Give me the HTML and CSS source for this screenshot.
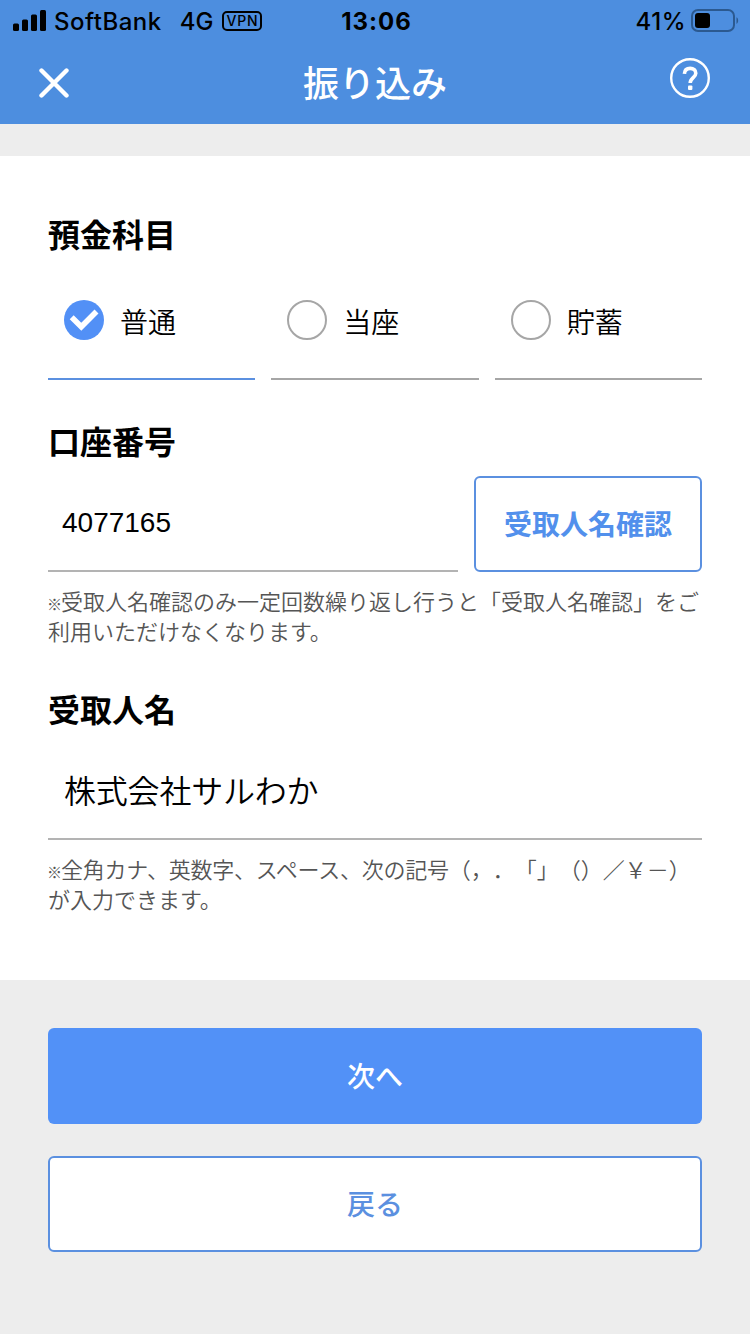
FILE: index.html
```html
<!DOCTYPE html>
<html lang="ja">
  <head>
    <meta charset="UTF-8" />
    <meta name="viewport" content="width=device-width, initial-scale=1.0" />
    <title>振り込み</title>
    <link rel="stylesheet" href="styles.css">
  </head>
  <body>
    <header class="header">
      <div class="status-bar">
        <div class="status-left">
          <svg class="signal" width="34" height="22" viewBox="0 0 34 22">
            <rect x="0" y="13.5" width="6" height="7.5" rx="1.5" />
            <rect x="9" y="9.5" width="6" height="11.5" rx="1.5" />
            <rect x="18" y="4.5" width="6" height="16.5" rx="1.5" />
            <rect x="27" y="0" width="6" height="21" rx="1.5" />
          </svg>
          <span class="carrier">SoftBank</span>
          <span class="network">4G</span>
          <span class="vpn">VPN</span>
        </div>
        <span class="clock">13:06</span>
        <div class="status-right">
          <span class="percent">41%</span>
          <svg class="battery" width="49" height="24" viewBox="0 0 49 24">
            <rect x="1" y="1" width="42" height="21" rx="6" fill="none" stroke="#2b5990" stroke-width="2" />
            <rect x="4" y="4" width="15" height="15" rx="3" fill="#000" />
            <path d="M45.500 8.300c2.200 1 2.200 5.600 0 6.600z" fill="#2b5990" />
          </svg>
        </div>
      </div>
      <div class="nav-bar">
        <button class="icon-btn" aria-label="閉じる">
          <svg width="30" height="30" viewBox="0 0 30 30">
            <path d="M2.500 2.500l25 25M27.500 2.500l-25 25" fill="none" stroke="#fff" stroke-width="4.400" stroke-linecap="round" />
          </svg>
        </button>
        <h1>振り込み</h1>
        <button class="icon-btn help" aria-label="ヘルプ">
          <svg width="40" height="40" viewBox="0 0 40 40" fill="none" stroke="#fff">
            <circle cx="20" cy="20" r="18.800" stroke-width="2.400" />
            <path d="M14.400 15.800c.2-3.600 2.400-5.400 5.800-5.400c3.400 0 5.600 1.900 5.600 4.800c0 4.300-5.600 4.600-5.600 9.800" stroke-width="3.600" />
            <rect x="18" y="27.600" width="4.400" height="4.400" rx="1" fill="#fff" stroke="none" />
          </svg>
        </button>
      </div>
    </header>

    <main class="card">
      <h2>預金科目</h2>
      <div class="account-types">
        <div class="type selected">
          <svg class="mark" width="40" height="40" viewBox="0 0 40 40">
            <circle cx="20" cy="20" r="20" fill="#5290f6" />
            <path d="M7.700 17.200L17.300 26.700L32.500 11.500" fill="none" stroke="#fff" stroke-width="5.600" />
          </svg>
          <span>普通</span>
        </div>
        <div class="type">
          <span class="mark circle"></span>
          <span>当座</span>
        </div>
        <div class="type">
          <span class="mark circle"></span>
          <span>貯蓄</span>
        </div>
      </div>

      <h2>口座番号</h2>
      <div class="number-row">
        <input class="field number" type="text" value="4077165" />
        <button class="btn btn-outline confirm">受取人名確認</button>
      </div>
      <p class="note"><span class="kome">※</span>受取人名確認のみ一定回数繰り返し行うと「受取人名確認」をご<br />利用いただけなくなります。</p>

      <h2>受取人名</h2>
      <input class="field name" type="text" value="株式会社サルわか" />
      <p class="note"><span class="kome">※</span><span class="tight">全角カナ、英数字、スペース、次の記号</span>（，．「」（）／￥－）<br />が入力できます。</p>
    </main>

    <div class="actions">
      <button class="btn btn-primary">次へ</button>
      <button class="btn btn-outline">戻る</button>
    </div>
  </body>
</html>
```
FILE: styles.css
```css
:root {
  --header-color: #4d8edf;
  --primary-color: #5291f7;
  --border-color: #5b90e0;
  --line-color: #b3b3b3;
  --background-color: #ededed;
}

* {
  box-sizing: border-box;
}

body {
  margin: 0;
  background-color: var(--background-color);
  color: #000;
  font-family: "Noto Sans CJK JP", sans-serif;
  text-spacing-trim: space-all;
}

button,
input {
  font-family: inherit;
  padding: 0;
  border: none;
  background: none;
}

.header {
  height: 124px;
  background-color: var(--header-color);
}

.status-bar {
  display: grid;
  grid-template-columns: 1fr auto 1fr;
  align-items: center;
  height: 40px;
  padding: 0 10px 0 13px;
  font-family: Inter, sans-serif;
  font-size: 24px;
  font-weight: 500;
  line-height: 40px;
}

.status-left,
.status-right {
  display: flex;
  align-items: center;
}

.status-right {
  justify-content: flex-end;
  gap: 5px;
}

.carrier,
.network,
.clock,
.percent {
  padding-top: 2px;
}

.carrier {
  margin-left: 7px;
  letter-spacing: 0.5px;
}

.network {
  margin-left: 18px;
}

.percent {
  letter-spacing: 0.5px;
}

.vpn {
  width: 40px;
  height: 20px;
  margin-left: 9px;
  border: 2px solid #000;
  border-radius: 5px;
  font-size: 14px;
  letter-spacing: 0.8px;
  line-height: 16px;
  text-align: center;
}

.clock {
  font-weight: 700;
  letter-spacing: 1px;
}

.nav-bar {
  display: flex;
  justify-content: space-between;
  align-items: center;
  height: 84px;
  padding: 0 40px 0 39px;
}

.nav-bar h1 {
  margin: 0;
  padding: 0 0 3px 1px;
  color: white;
  font-size: 36px;
  font-weight: 500;
}

.icon-btn {
  display: flex;
  width: 40px;
  padding-top: 1px;
}

.icon-btn.help {
  padding: 0 0 8px;
}

.card {
  height: 824px;
  margin-top: 32px;
  padding: 53px 48px 0;
  background-color: white;
}

h2 {
  margin: 0;
  font-size: 32px;
  font-weight: 700;
  line-height: 48px;
}

.account-types {
  display: grid;
  grid-template-columns: repeat(3, 1fr);
  gap: 16px;
  margin: 3px 0 36px;
}

.type {
  display: flex;
  align-items: center;
  gap: 16px;
  height: 120px;
  padding: 2px 16px 0;
  border-bottom: 2px solid #a6a6a6;
  font-size: 28px;
  font-weight: 350;
}

.type.selected {
  border-color: var(--border-color);
}

.type span:last-child {
  padding-top: 2px;
}

.mark {
  flex: none;
  width: 40px;
  height: 40px;
}

.circle {
  border: 2px solid #a6a6a6;
  border-radius: 50%;
}

.number-row {
  display: flex;
  gap: 16px;
  margin-top: 12px;
}

.field {
  display: block;
  border-bottom: 2px solid var(--line-color);
  border-radius: 0;
  color: #000;
}

.number {
  flex: 1;
  min-width: 0;
  height: 96px;
  padding: 0 14px;
  font-family: "Liberation Sans", sans-serif;
  font-size: 28px;
}

.name {
  width: 100%;
  height: 96px;
  margin-top: 12px;
  padding: 0 16px 4px;
  font-size: 32px;
  font-weight: 350;
  letter-spacing: -0.2px;
}

.note {
  margin: 13px 0 39px;
  color: #555;
  font-size: 22px;
  font-weight: 350;
  line-height: 30px;
  white-space: nowrap;
}

.kome {
  display: inline-block;
  width: 13px;
  margin-left: -1px;
  margin-right: 1px;
  font-size: 15px;
  font-weight: 500;
  line-height: 1;
}

.tight {
  letter-spacing: -0.25px;
}

.btn {
  height: 96px;
  padding-bottom: 3px;
  border-radius: 6px;
  font-size: 28px;
  font-weight: 500;
}

.btn-primary {
  background-color: var(--primary-color);
  color: white;
}

.btn-outline {
  border: 2px solid var(--border-color);
  background-color: white;
  color: var(--border-color);
}

.confirm {
  width: 228px;
  color: #5290ec;
  font-weight: 700;
}

.actions {
  display: flex;
  flex-direction: column;
  gap: 32px;
  padding: 48px;
}
```
